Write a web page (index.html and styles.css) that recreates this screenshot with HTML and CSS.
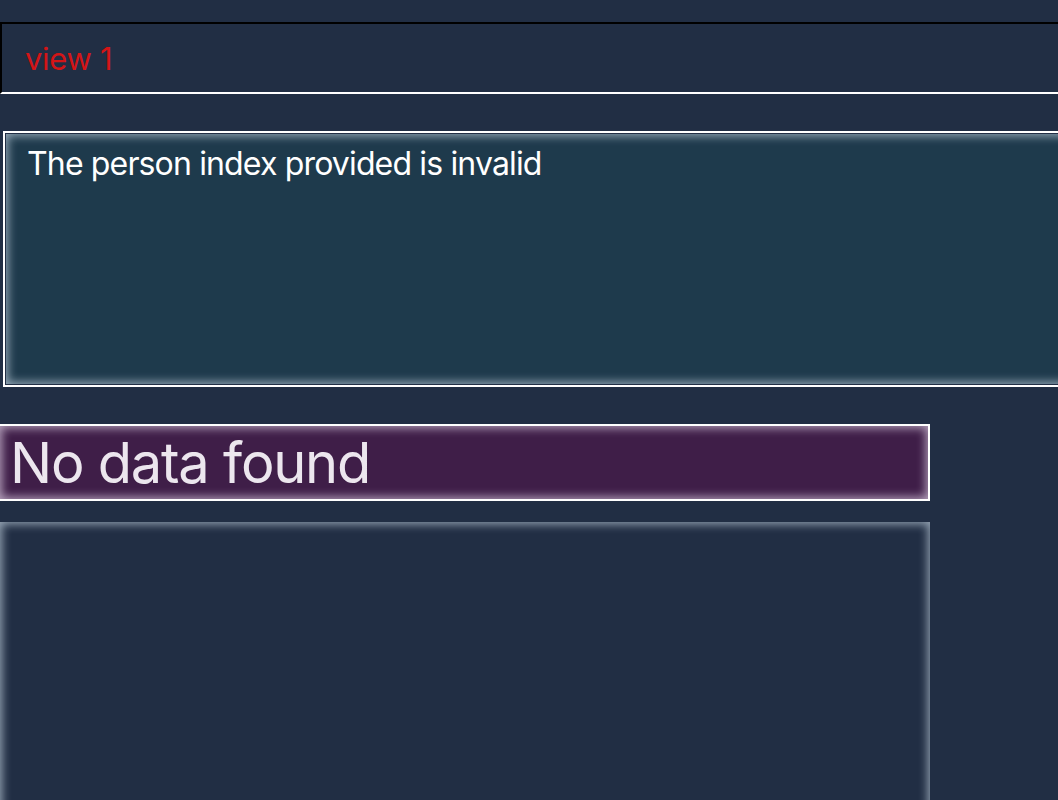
FILE: index.html
```html
<!DOCTYPE html>
<html lang="en">
<head>
<meta charset="utf-8">
<title>view 1</title>
<link rel="stylesheet" href="styles.css">
</head>
<body>
  <header class="view-header">
    <span class="view-title">view 1</span>
  </header>
  <section class="message-panel">
    <p class="message-text">The person index provided is invalid</p>
  </section>
  <section class="empty-banner">
    <h1 class="empty-title">No data found</h1>
  </section>
  <section class="data-area"></section>
</body>
</html>
```
FILE: styles.css
```css
html, body {
  margin: 0;
  padding: 0;
}
body {
  background: #212e44;
  font-family: Inter, "Noto Sans", "Liberation Sans", sans-serif;
  overflow: hidden;
  height: 800px;
  padding-top: 22px;
  box-sizing: border-box;
}
.view-header {
  display: flex;
  align-items: center;
  height: 68px;
  border-top: 2px solid #000;
  border-left: 2px solid #000;
  border-bottom: 2px solid #fff;
  padding-left: 23px;
}
.view-title {
  color: #d31517;
  font-size: 31px;
  letter-spacing: -0.3px;
  line-height: 1;
}
.message-panel {
  margin: 40px 0 0 6px;
  width: 1100px;
  height: 250px;
  box-sizing: border-box;
  background: #1e3a4c;
  outline: 2px solid #fff;
  outline-offset: 1px;
  box-shadow: inset 0 0 10px 2px rgba(200, 215, 228, 0.7);
  padding: 11px 0 0 21px;
}
.message-text {
  margin: 0;
  color: #fff;
  font-size: 32px;
  letter-spacing: -0.85px;
  line-height: 1.2;
}
.empty-banner {
  margin-top: 40px;
  width: 930px;
  height: 77px;
  box-sizing: border-box;
  border: 2px solid #fff;
  border-left: none;
  background: #3f1e48;
  box-shadow: inset 0 0 10px 2px rgba(230, 215, 235, 0.7);
  padding: 0 0 0 10px;
  display: flex;
  align-items: center;
}
.empty-title {
  margin: 0;
  color: #ece6ee;
  font-size: 56px;
  font-weight: 400;
  letter-spacing: -1.25px;
  line-height: 1;
}
.data-area {
  margin-top: 21px;
  width: 930px;
  height: 300px;
  box-shadow: inset 0 0 10px 2px rgba(200, 215, 228, 0.7);
}
```
